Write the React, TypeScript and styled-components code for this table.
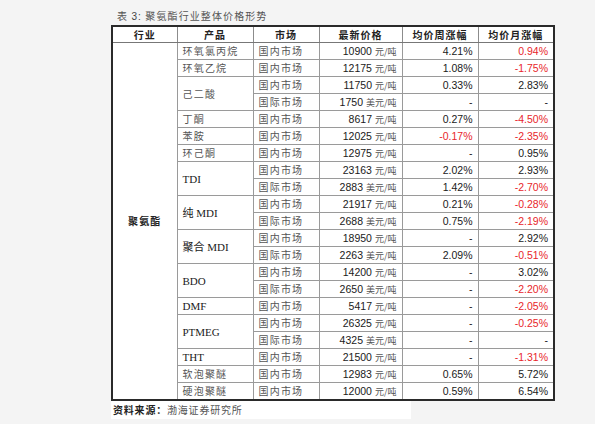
import React from "react";
import styled, { createGlobalStyle } from "styled-components";

const Global = createGlobalStyle`
  html, body { margin: 0; padding: 0; background: #f4f4f4; }
  body { width: 595px; height: 424px; overflow: hidden; }
`;

const Page = styled.div`
  padding: 8px 0 0 111px;
  font-family: "Noto Sans CJK SC", sans-serif;
`;

const Title = styled.div`
  font-family: "Noto Sans CJK SC", sans-serif;
  font-size: 10px;
  line-height: 16px;
  color: #555;
  padding-left: 6px;
  letter-spacing: 1.1px;
  & b { font-family: "Liberation Sans", sans-serif; font-weight: 400; color: #444; }
`;

const Table = styled.table`
  border-collapse: collapse;
  table-layout: fixed;
  width: 442px;
  background: #fff;
  border: 2px solid #2a2a2a;
`;

const Th = styled.th`
  height: 15px;
  padding: 0;
  border: 1px solid #8c8c8c;
  border-bottom: 1px solid #777;
  font-family: "Noto Sans CJK SC", sans-serif;
  font-size: 10px;
  font-weight: 700;
  color: #222;
  text-align: center;
  letter-spacing: 1px;
  line-height: 14px;
`;

const Td = styled.td<{ $align?: "left" | "right" | "center"; $red?: boolean; $serif?: boolean; $cjk?: boolean; $bold?: boolean }>`
  height: 16px;
  padding: 0 ${(p) => (p.$align === "right" ? "5px" : "0")} 0 ${(p) => (p.$align === "left" ? "5px" : "0")};
  border: 1px solid #9a9a9a;
  font-family: ${(p) =>
    p.$serif ? `"Liberation Serif", "Noto Sans CJK SC", serif` : p.$cjk ? `"Noto Sans CJK SC", sans-serif` : `"Liberation Sans", "Noto Sans CJK SC", sans-serif`};
  font-size: ${(p) => (p.$cjk ? "10px" : p.$serif ? "11px" : "10.5px")};
  font-weight: ${(p) => (p.$bold ? 700 : 400)};
  letter-spacing: ${(p) => (p.$cjk ? "1.2px" : "0")};
  color: ${(p) => (p.$red ? "#e8262b" : p.$bold ? "#222" : p.$cjk ? "#555" : "#1a1a1a")};
  text-align: ${(p) => p.$align || "left"};
  line-height: 14px;
  white-space: nowrap;
  overflow: hidden;
`;

const Unit = styled.span`
  font-family: "Noto Sans CJK SC", sans-serif;
  font-size: 9px;
  color: #555;
  margin-left: 3px;
`;

const Source = styled.div`
  width: 298px;
  background: #fff;
  font-family: "Noto Sans CJK SC", sans-serif;
  font-size: 10px;
  line-height: 18px;
  color: #555;
  letter-spacing: 0.8px;
  padding-left: 2px;
  & b { color: #222; font-weight: 700; }
`;

type Row = {
  product?: string;
  span?: number;
  serif?: boolean;
  market: string;
  price: string;
  unit: string;
  week: string;
  month: string;
  weekRed?: boolean;
  monthRed?: boolean;
};

const rows: Row[] = [
  { product: "环氧氯丙烷", market: "国内市场", price: "10900", unit: "元/吨", week: "4.21%", month: "0.94%", monthRed: true },
  { product: "环氧乙烷", market: "国内市场", price: "12175", unit: "元/吨", week: "1.08%", month: "-1.75%", monthRed: true },
  { product: "己二酸", span: 2, market: "国内市场", price: "11750", unit: "元/吨", week: "0.33%", month: "2.83%" },
  { market: "国际市场", price: "1750", unit: "美元/吨", week: "-", month: "-" },
  { product: "丁酮", market: "国内市场", price: "8617", unit: "元/吨", week: "0.27%", month: "-4.50%", monthRed: true },
  { product: "苯胺", market: "国内市场", price: "12025", unit: "元/吨", week: "-0.17%", month: "-2.35%", weekRed: true, monthRed: true },
  { product: "环己酮", market: "国内市场", price: "12975", unit: "元/吨", week: "-", month: "0.95%" },
  { product: "TDI", span: 2, serif: true, market: "国内市场", price: "23163", unit: "元/吨", week: "2.02%", month: "2.93%" },
  { market: "国际市场", price: "2883", unit: "美元/吨", week: "1.42%", month: "-2.70%", monthRed: true },
  { product: "纯 MDI", span: 2, serif: true, market: "国内市场", price: "21917", unit: "元/吨", week: "0.21%", month: "-0.28%", monthRed: true },
  { market: "国际市场", price: "2688", unit: "美元/吨", week: "0.75%", month: "-2.19%", monthRed: true },
  { product: "聚合 MDI", span: 2, serif: true, market: "国内市场", price: "18950", unit: "元/吨", week: "-", month: "2.92%" },
  { market: "国际市场", price: "2263", unit: "美元/吨", week: "2.09%", month: "-0.51%", monthRed: true },
  { product: "BDO", span: 2, serif: true, market: "国内市场", price: "14200", unit: "元/吨", week: "-", month: "3.02%" },
  { market: "国际市场", price: "2650", unit: "美元/吨", week: "-", month: "-2.20%", monthRed: true },
  { product: "DMF", serif: true, market: "国内市场", price: "5417", unit: "元/吨", week: "-", month: "-2.05%", monthRed: true },
  { product: "PTMEG", span: 2, serif: true, market: "国内市场", price: "26325", unit: "元/吨", week: "-", month: "-0.25%", monthRed: true },
  { market: "国际市场", price: "4325", unit: "美元/吨", week: "-", month: "-" },
  { product: "THT", serif: true, market: "国内市场", price: "21500", unit: "元/吨", week: "-", month: "-1.31%", monthRed: true },
  { product: "软泡聚醚", market: "国内市场", price: "12983", unit: "元/吨", week: "0.65%", month: "5.72%" },
  { product: "硬泡聚醚", market: "国内市场", price: "12000", unit: "元/吨", week: "0.59%", month: "6.54%" },
];

export default function App() {
  return (
    <>
      <Global />
      <Page>
        <Title>
          表 <b>3:</b> 聚氨酯行业整体价格形势
        </Title>
        <Table>
          <colgroup>
            <col style={{ width: 65 }} />
            <col style={{ width: 76 }} />
            <col style={{ width: 66 }} />
            <col style={{ width: 83 }} />
            <col style={{ width: 76 }} />
            <col style={{ width: 76 }} />
          </colgroup>
          <thead>
            <tr>
              <Th>行业</Th>
              <Th>产品</Th>
              <Th>市场</Th>
              <Th>最新价格</Th>
              <Th>均价周涨幅</Th>
              <Th>均价月涨幅</Th>
            </tr>
          </thead>
          <tbody>
            {rows.map((r, i) => (
              <tr key={i}>
                {i === 0 && (
                  <Td rowSpan={rows.length} $align="center" $cjk $bold>
                    聚氨酯
                  </Td>
                )}
                {r.product !== undefined && (
                  <Td rowSpan={r.span || 1} $align="left" $cjk={!r.serif} $serif={r.serif}>
                    {r.product}
                  </Td>
                )}
                <Td $align="left" $cjk>
                  {r.market}
                </Td>
                <Td $align="right">
                  {r.price}
                  <Unit>{r.unit}</Unit>
                </Td>
                <Td $align="right" $red={r.weekRed}>
                  {r.week}
                </Td>
                <Td $align="right" $red={r.monthRed}>
                  {r.month}
                </Td>
              </tr>
            ))}
          </tbody>
        </Table>
        <Source>
          <b>资料来源：</b>渤海证券研究所
        </Source>
      </Page>
    </>
  );
}
